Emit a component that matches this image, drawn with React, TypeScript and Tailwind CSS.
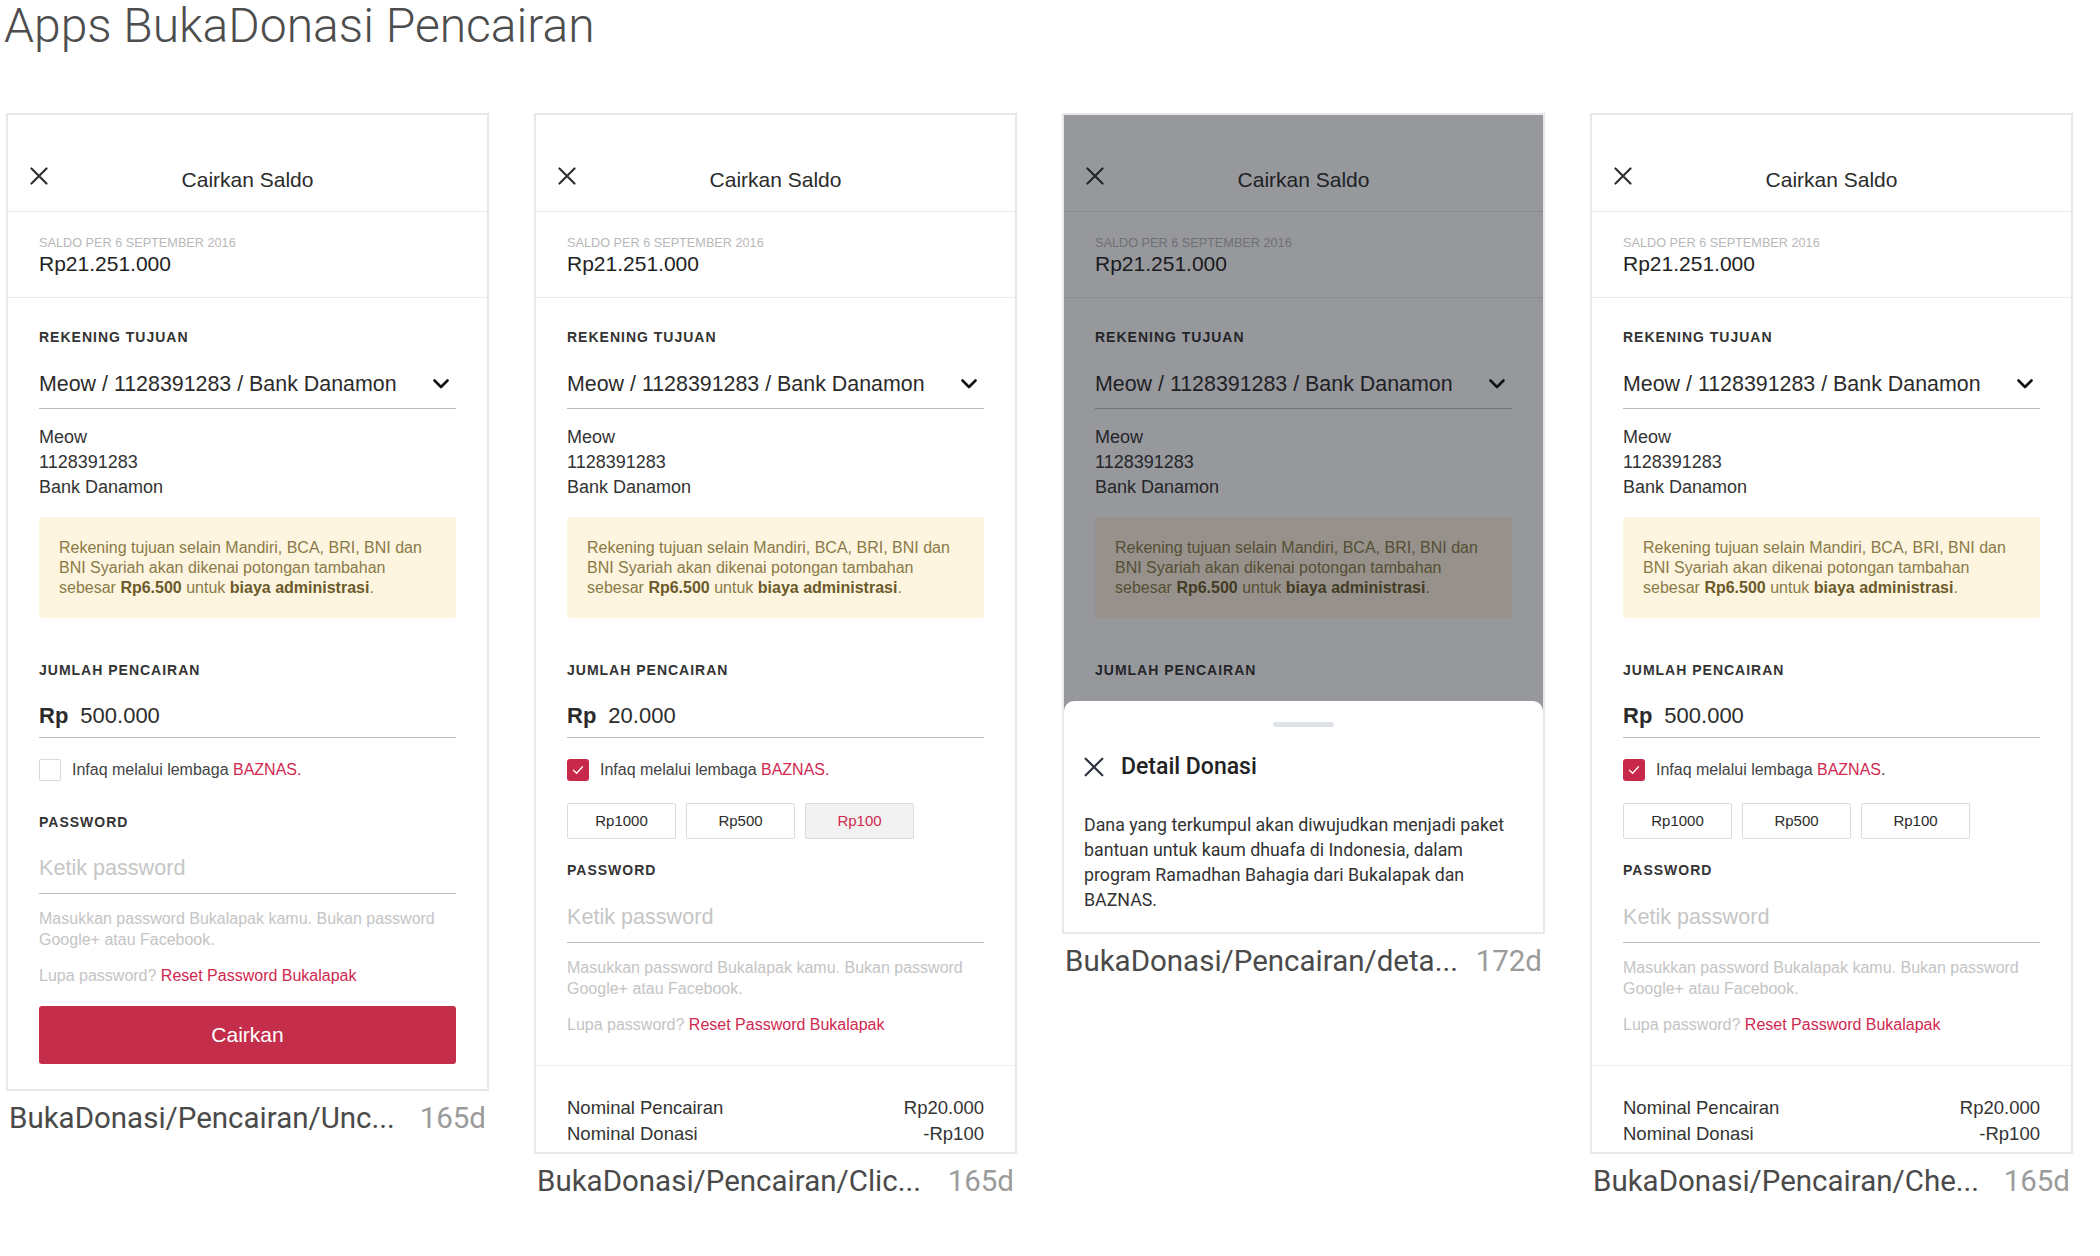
import React from 'react';

// Mockup text uses Arial metrics, board labels use Roboto
const SANS = "font-['Liberation_Sans',Arial,sans-serif]";
const ROBOTO = "font-['Roboto',sans-serif]";

function CloseIcon({ size = 18, stroke = 2.2, color = '#333' }: { size?: number; stroke?: number; color?: string }) {
  return (
    <svg width={size} height={size} viewBox="0 0 18 18" fill="none">
      <path d="M1.5 1.5L16.5 16.5M16.5 1.5L1.5 16.5" stroke={color} strokeWidth={stroke} strokeLinecap="round" />
    </svg>
  );
}

function Chevron() {
  return (
    <svg width="16" height="10" viewBox="0 0 16 10" fill="none">
      <path d="M1.5 1.5L8 8L14.5 1.5" stroke="#111" strokeWidth="2.6" strokeLinecap="round" strokeLinejoin="round" />
    </svg>
  );
}

function Checkbox({ checked }: { checked: boolean }) {
  if (!checked) {
    return <div className="h-[22px] w-[22px] shrink-0 rounded-[2px] border border-[#d9d9d9] bg-white" />;
  }
  return (
    <div className="flex h-[22px] w-[22px] shrink-0 items-center justify-center rounded-[3px] bg-[#c8294b]">
      <svg width="12" height="10" viewBox="0 0 12 10" fill="none">
        <path d="M1.5 5.2L4.6 8.2L10.5 1.8" stroke="#fff" strokeWidth="1.3" strokeLinecap="round" strokeLinejoin="round" />
      </svg>
    </div>
  );
}

function Label({ children, className = '' }: { children: React.ReactNode; className?: string }) {
  return (
    <div className={`text-[14px] font-bold uppercase leading-[18px] tracking-[1px] text-[#333] ${className}`}>
      {children}
    </div>
  );
}

interface FormProps {
  amount: string;
  checked: boolean;
  showChips?: boolean;
  selectedChip?: number | null;
  showButton?: boolean;
  showSummary?: boolean;
  redPeriod?: boolean;
  // only the part above the bottom sheet is rendered
  partial?: boolean;
}

const CHIPS = ['Rp1000', 'Rp500', 'Rp100'];

function CairkanForm({
  amount,
  checked,
  showChips = false,
  selectedChip = null,
  showButton = false,
  showSummary = false,
  redPeriod = true,
  partial = false,
}: FormProps) {
  return (
    <div className={`${SANS} text-[#333]`}>
      {/* Header */}
      <div className="grid h-[97px] grid-cols-[1fr_auto_1fr] items-center border-b border-[#e8e8e8] px-[31px] pt-[34px]">
        <div className="-ml-[9px] mb-[8px]">
          <CloseIcon />
        </div>
        <div className="text-[21px] leading-[26px] text-[#2b2b2b]">Cairkan Saldo</div>
        <div />
      </div>

      {/* Saldo */}
      <div className="border-b border-[#ececec] px-[31px] pb-[21px] pt-[24px]">
        <div className="text-[12.7px] uppercase leading-[14px] text-[#b8b8b8]">Saldo per 6 September 2016</div>
        <div className="mt-[2px] text-[21px] leading-[24px] text-[#222]">Rp21.251.000</div>
      </div>

      <div className="px-[31px]">
        <Label className="mt-[30px]">Rekening Tujuan</Label>
        <div className="mt-[25px] flex items-center justify-between border-b border-[#bdbdbd] pb-[11px]">
          <span className="text-[21.4px] leading-[26px] text-[#2b2b2b]">Meow / 1128391283 / Bank Danamon</span>
          <span className="mr-[7px]">
            <Chevron />
          </span>
        </div>
        <div className="mt-[16px] text-[18px] leading-[25px] text-[#333]">
          <div>Meow</div>
          <div>1128391283</div>
          <div>Bank Danamon</div>
        </div>

        <div className="mt-[17px] rounded-[2px] bg-[#fdf5e0] px-[20px] pb-[20px] pt-[21px] text-[16px] leading-[20px] text-[#8b7a47]">
          Rekening tujuan selain Mandiri, BCA, BRI, BNI dan
          <br />
          BNI Syariah akan dikenai potongan tambahan
          <br />
          sebesar <b className="text-[#6b5a2a]">Rp6.500</b> untuk <b className="text-[#6b5a2a]">biaya administrasi</b>.
        </div>

        <Label className="mt-[43px]">Jumlah Pencairan</Label>
        {!partial && (
          <>
            <div className="mt-[23px] flex items-center gap-[12px] border-b border-[#bdbdbd] pb-[7px] text-[22px] leading-[28px]">
              <span className="font-bold text-[#2b2b2b]">Rp</span>
              <span className="text-[#2b2b2b]">{amount}</span>
            </div>

            <div className="mt-[21px] flex items-center gap-[11px]">
              <Checkbox checked={checked} />
              <span className="text-[16px] leading-[22px] text-[#444]">
                Infaq melalui lembaga <span className="text-[#d0284f]">BAZNAS</span>
                <span className={redPeriod ? 'text-[#d0284f]' : 'text-[#444]'}>.</span>
              </span>
            </div>

            {showChips && (
              <div className="mt-[22px] flex gap-[10px]">
                {CHIPS.map((c, i) => (
                  <div
                    key={c}
                    className={`flex h-[36px] w-[109px] items-center justify-center rounded-[2px] border border-[#dcdcdc] text-[15px] ${
                      selectedChip === i ? 'bg-[#f2f2f2] text-[#d0284f]' : 'bg-white text-[#2b2b2b]'
                    }`}
                  >
                    {c}
                  </div>
                ))}
              </div>
            )}

            <Label className={showChips ? 'mt-[22px]' : 'mt-[32px]'}>Password</Label>
            <div
              className={`${showChips ? 'mt-[25px]' : 'mt-[24px]'} border-b border-[#bdbdbd] pb-[12px] text-[21.6px] leading-[26px] text-[#c6c6c6]`}
            >
              Ketik password
            </div>
            <div className="mt-[14px] text-[16px] leading-[21px] text-[#c4c4c4]">
              Masukkan password Bukalapak kamu. Bukan password
              <br />
              Google+ atau Facebook.
            </div>
            <div className="mt-[15px] text-[16px] leading-[21px] text-[#c4c4c4]">
              Lupa password? <span className="text-[#d0284f]">Reset Password Bukalapak</span>
            </div>

            {showButton && (
              <div className="mt-[20px] flex h-[58px] items-center justify-center rounded-[3px] bg-[#c42e4a] text-[21px] text-white">
                Cairkan
              </div>
            )}
          </>
        )}
      </div>

      {showSummary && (
        <div className="mt-[30px] border-t border-[#eeeeee] px-[31px] pt-[29px] text-[18.5px] leading-[26px] text-[#333]">
          <div className="flex justify-between">
            <span>Nominal Pencairan</span>
            <span>Rp20.000</span>
          </div>
          <div className="flex justify-between">
            <span>Nominal Donasi</span>
            <span>-Rp100</span>
          </div>
        </div>
      )}
    </div>
  );
}

function DetailSheet() {
  return (
    <div className="absolute bottom-0 left-0 right-0 h-[231px] rounded-t-[10px] bg-white px-[20px] pt-[21px]">
      <div className="mx-auto h-[5px] w-[61px] rounded-full bg-[#dfe3e8]" />
      <div className="mt-[26px] flex items-center gap-[17px]">
        <CloseIcon size={20} stroke={2} color="#2f3542" />
        <span className={`${ROBOTO} text-[23px] font-medium leading-[28px] text-[#222]`}>Detail Donasi</span>
      </div>
      <p className={`${ROBOTO} mt-[31px] text-[17.8px] leading-[25px] text-[#333]`}>
        Dana yang terkumpul akan diwujudkan menjadi paket
        <br />
        bantuan untuk kaum dhuafa di Indonesia, dalam
        <br />
        program Ramadhan Bahagia dari Bukalapak dan
        <br />
        BAZNAS.
      </p>
    </div>
  );
}

function Board({
  name,
  age,
  height,
  children,
}: {
  name: string;
  age: string;
  height: string;
  children: React.ReactNode;
}) {
  return (
    <div className="w-[483px] shrink-0">
      <div className={`relative overflow-hidden border-2 border-[#e8e8e8] bg-white ${height}`}>{children}</div>
      <div className={`${ROBOTO} mt-[9px] flex justify-between px-[3px] text-[29.5px] leading-[36px]`}>
        <span className="text-[#4a4a4a]">{name}</span>
        <span className="text-[#9b9b9b]">{age}</span>
      </div>
    </div>
  );
}

export default function App() {
  return (
    <div className="min-h-[1256px] w-[2100px] bg-white">
      <h1 className={`${ROBOTO} pl-[4px] text-[48px] font-light leading-[52px] text-[#4d4d4d]`}>
        Apps BukaDonasi Pencairan
      </h1>

      <div className="mt-[61px] flex items-start gap-[45px] pl-[6px]">
        <Board name="BukaDonasi/Pencairan/Unc..." age="165d" height="h-[978px]">
          <CairkanForm amount="500.000" checked={false} showButton />
        </Board>

        <Board name="BukaDonasi/Pencairan/Clic..." age="165d" height="h-[1041px]">
          <CairkanForm amount="20.000" checked showChips selectedChip={2} showSummary />
        </Board>

        <Board name="BukaDonasi/Pencairan/deta..." age="172d" height="h-[821px]">
          <CairkanForm amount="500.000" checked={false} partial />
          <div className="absolute inset-0 bg-[rgba(19,21,30,0.44)]" />
          <DetailSheet />
        </Board>

        <Board name="BukaDonasi/Pencairan/Che..." age="165d" height="h-[1041px]">
          <CairkanForm amount="500.000" checked showChips showSummary redPeriod={false} />
        </Board>
      </div>
    </div>
  );
}
